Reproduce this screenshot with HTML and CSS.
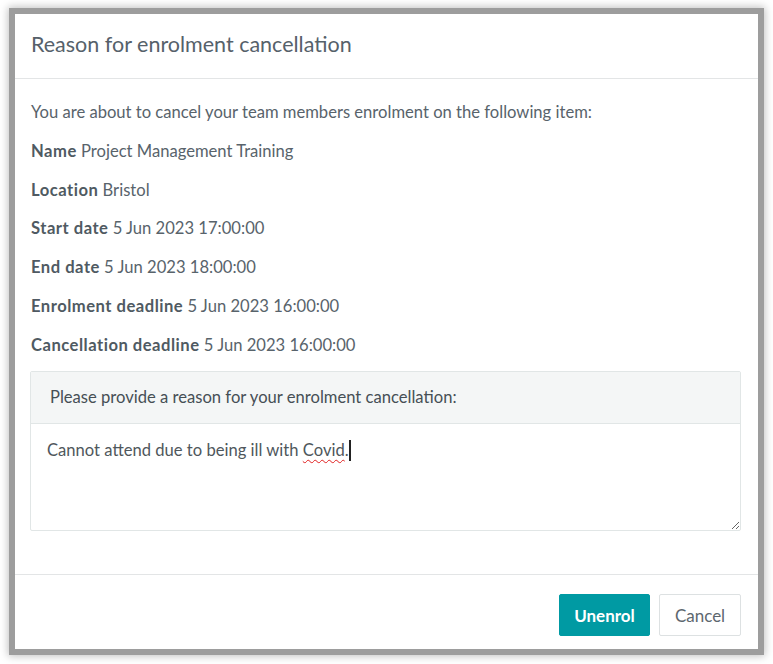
FILE: index.html
```html
<!DOCTYPE html>
<html lang="en">
<head>
    <meta charset="UTF-8">
    <meta name="viewport" content="width=device-width, initial-scale=1.0">
    <title>Reason for enrolment cancellation</title>
    <link rel="stylesheet" href="styles.css">
</head>
<body>
    <div class="modal">
        <div class="modal-header">
            <h2>Reason for enrolment cancellation</h2>
        </div>

        <div class="modal-body">
            <p>You are about to cancel your team members enrolment on the following item:</p>
            <p><strong>Name</strong> Project Management Training</p>
            <p><strong>Location</strong> Bristol</p>
            <p><strong>Start date</strong> 5 Jun 2023 17:00:00</p>
            <p><strong>End date</strong> 5 Jun 2023 18:00:00</p>
            <p><strong>Enrolment deadline</strong> 5 Jun 2023 16:00:00</p>
            <p><strong>Cancellation deadline</strong> 5 Jun 2023 16:00:00</p>

            <div class="reason-panel">
                <div class="reason-heading">Please provide a reason for your enrolment cancellation:</div>
                <div class="reason-input">Cannot attend due to being ill with <span class="misspelt">Covid</span>.<span class="caret"></span></div>
            </div>
        </div>

        <div class="modal-footer">
            <button class="btn btn-primary">Unenrol</button>
            <button class="btn btn-default">Cancel</button>
        </div>
    </div>
</body>
</html>
```

FILE: styles.css
```css
/* Reset */
* {
    margin: 0;
    padding: 0;
    box-sizing: border-box;
}

html, body {
    height: 100%;
}

body {
    font-family: 'Lato', 'Open Sans', sans-serif;
    background-color: #ffffff;
    color: #58636b;
    font-size: 16.6px;
    padding: 14px 0 0 15px;
}

.modal {
    width: 743px;
    height: 635px;
    background-color: #ffffff;
    display: flex;
    flex-direction: column;
    box-shadow: 0 0 0 6px #9d9d9d, 0 0 8px 7px rgba(0, 0, 0, 0.25);
}

.modal-header {
    height: 65px;
    padding: 0 16px;
    display: flex;
    align-items: center;
    border-bottom: 1px solid #e3e5e6;
}

.modal-header h2 {
    font-weight: 400;
    font-size: 21.5px;
    color: #56616a;
    margin-top: -5px;
}

.modal-body {
    padding: 22px 17px 0 15px;
    flex-grow: 1;
}

.modal-body p {
    line-height: 22.8px;
    margin-bottom: 16px;
    padding-left: 1px;
}

.modal-body p:last-of-type {
    margin-bottom: 14px;
}

.modal-body strong {
    font-weight: 700;
    color: #4f5a62;
    letter-spacing: 0.5px;
}

.reason-panel {
    border: 1px solid #e1e6e6;
    border-radius: 2px;
}

.reason-heading {
    height: 52px;
    padding: 0 19px;
    display: flex;
    align-items: center;
    background-color: #f4f6f6;
    border-bottom: 1px solid #e1e6e6;
    color: #464f55;
}

.reason-input {
    height: 106px;
    padding: 15px 16px;
    color: #4f575c;
    line-height: 22px;
    resize: vertical;
    overflow: auto;
}

.misspelt {
    text-decoration: underline wavy #e02020;
    text-decoration-thickness: 1px;
    text-underline-offset: 3px;
}

.caret {
    display: inline-block;
    width: 2px;
    height: 21px;
    background-color: #222222;
    vertical-align: -5px;
}

.modal-footer {
    height: 75px;
    padding: 19px 17px 0 0;
    display: flex;
    justify-content: flex-end;
    align-items: flex-start;
    gap: 9px;
    border-top: 1px solid #e3e5e6;
}

.btn {
    height: 42px;
    padding: 0;
    font-family: inherit;
    font-size: 17px;
    border-radius: 2px;
    cursor: pointer;
}

.btn-primary {
    width: 91px;
    background-color: #009aa3;
    border: 1px solid #009aa3;
    color: #ffffff;
    font-weight: 700;
}

.btn-default {
    width: 82px;
    background-color: #ffffff;
    border: 1px solid #dde1e2;
    color: #5d676e;
}
```
